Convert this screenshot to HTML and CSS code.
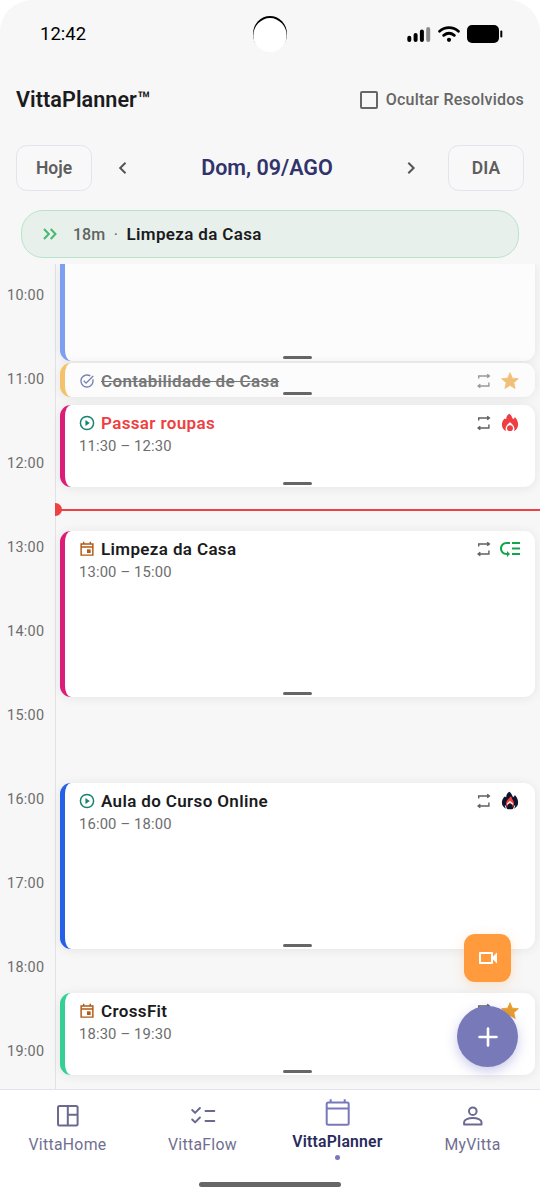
FILE: index.html
```html
<!DOCTYPE html>
<html lang="pt-BR">
<head>
<meta charset="utf-8">
<meta name="viewport" content="width=device-width">
<title>VittaPlanner</title>
<link rel="stylesheet" href="styles.css">
</head>
<body>
<svg class="defs" width="0" height="0" aria-hidden="true">
  <symbol id="repeat" viewBox="0 0 16 16"><path d="M2.700 5.400V3h10.500M11.200 1.200 13.400 3l-2.200 1.800M12.900 9.400V13H1.900M4.300 11.200 2.100 13l2.200 1.800" fill="none" stroke="currentColor" stroke-width="1.400"/></symbol>
  <symbol id="star" viewBox="0 0 24 24"><path fill="currentColor" stroke="currentColor" stroke-width="1" stroke-linejoin="round" d="M12 17.270 18.180 21l-1.640-7.030L22 9.240l-7.190-.61L12 2 9.190 8.630 2 9.240l5.460 4.730L5.820 21z"/></symbol>
  <symbol id="play" viewBox="0 0 24 24"><circle cx="12" cy="12" r="9.900" fill="none" stroke="currentColor" stroke-width="2.200"/><path d="m9.700 7.600 6.400 4.400-6.400 4.400z" fill="currentColor"/></symbol>
  <symbol id="event" viewBox="0 0 24 24"><path fill="none" stroke="currentColor" stroke-width="2.200" d="M3.200 4.500h17.600v16.700H3.200zM3.200 9h17.600M7 5V1.200M17 5V1.200"/><path fill="currentColor" d="M12 12.500h5.500V18H12z"/></symbol>
</svg>
<div class="screen">
  <header class="status">
    <span class="clock">12:42</span>
    <span class="camera"></span>
    <span class="indicators">
      <svg width="24" height="18" viewBox="0 0 24 18"><g stroke="#000" stroke-width="4" stroke-linecap="round"><path d="M2.300 12.700v2.200M8.600 9.900v5M14.900 6.600v8.300"/><path stroke="#8b8b8b" d="M21.200 4v10.900"/></g></svg>
      <svg width="22" height="18" viewBox="0 0 22 18"><g fill="none" stroke="#000" stroke-width="2.800" stroke-linecap="round"><path d="M1.600 6.200c5.400-4.800 13.400-4.800 18.800 0M5.700 10.300c3.200-2.500 7.400-2.500 10.600 0"/></g><circle cx="11" cy="14.800" r="2.100"/></svg>
      <svg width="36" height="18" viewBox="0 0 36 18"><rect width="32" height="18" rx="5"/><rect x="33.300" y="5.500" width="2" height="7" rx="1"/></svg>
    </span>
  </header>
  <div class="titlebar">
    <h1 class="brand">VittaPlanner™</h1>
    <label class="hide"><span class="box"></span><span class="hide-text">Ocultar Resolvidos</span></label>
  </div>
  <div class="datebar">
    <button class="pill"><span class="today">Hoje</span></button>
    <svg class="arrow" width="24" height="24" viewBox="0 0 24 24"><path d="m14.500 6.800-5.300 5.200 5.300 5.200"/></svg>
    <span class="date">Dom, 09/AGO</span>
    <svg class="arrow forward" width="24" height="24" viewBox="0 0 24 24"><path d="m9.300 6.800 5.300 5.200-5.300 5.200"/></svg>
    <button class="pill"><span class="day">DIA</span></button>
  </div>
  <div class="banner">
    <svg width="16" height="14" viewBox="0 0 16 14"><path d="m2 2 4.800 5L2 12M8.700 2l4.800 5-4.800 5" fill="none" stroke="#45b872" stroke-width="2"/></svg>
    <span class="left">18m</span><span class="sep">·</span><span class="next">Limpeza da Casa</span>
  </div>
  <main class="timeline">
    <div class="hours">
      <span>10:00</span><span>11:00</span><span>12:00</span><span>13:00</span><span>14:00</span><span>15:00</span><span>16:00</span><span>17:00</span><span>18:00</span><span>19:00</span>
    </div>
    <div class="events">
      <article class="card first done blue-soft"><i class="grip"></i></article>
      <article class="card slim done yellow">
        <div class="row">
          <svg class="kind" viewBox="0 0 24 24" color="#7480b5"><path fill="currentColor" d="M22 5.180 10.590 16.600l-4.240-4.240 1.410-1.410 2.830 2.830 10-10L22 5.180zm-2.210 5.040c.13.570.21 1.170.21 1.780 0 4.420-3.580 8-8 8s-8-3.580-8-8 3.580-8 8-8c1.580 0 3.040.460 4.280 1.250l1.440-1.440C16.100 2.670 14.130 2 12 2 6.480 2 2 6.480 2 12s4.480 10 10 10 10-4.480 10-10c0-1.190-.220-2.330-.600-3.390l-1.610 1.610z"/></svg>
          <h2 class="name struck">Contabilidade de Casa</h2>
          <svg class="repeat"><use href="#repeat"/></svg>
          <svg class="flag soft-star"><use href="#star"/></svg>
        </div><i class="grip"></i>
      </article>
      <article class="card short pink">
        <div class="row">
          <svg class="kind teal"><use href="#play"/></svg>
          <h2 class="name late">Passar roupas</h2>
          <svg class="repeat"><use href="#repeat"/></svg>
          <svg class="flag" viewBox="0 0 20 20"><path fill="#ef3e42" d="M9.300.8C7.200 2 6.200 3.900 6.200 6.300L4.700 5.400C3 7 1.900 9.200 1.900 11.400c0 3.300 1.800 5.700 4.300 6.700C4.400 14.600 6.700 11.800 10 9.300c3.300 2.500 5.600 5.300 3.800 8.800 2.500-1 4.300-3.400 4.300-6.700 0-2.800-1.400-5.600-3.300-7.300-.3 1.200-.9 1.900-1.800 2.100C11.900 3.600 10.800 1.500 9.300.8z"/><circle cx="10" cy="15.200" r="2.900" fill="#ef3e42"/></svg>
        </div>
        <p class="time">11:30 – 12:30</p><i class="grip"></i>
      </article>
      <article class="card tall pink">
        <div class="row">
          <svg class="kind brown"><use href="#event"/></svg>
          <h2 class="name">Limpeza da Casa</h2>
          <svg class="repeat"><use href="#repeat"/></svg>
          <svg class="flag priority" viewBox="0 0 24 24"><path fill="#13a54a" d="M14 5h8v2h-8zm0 5.500h8v2h-8zm0 5.500h8v2h-8zM2 11.500C2 15.080 4.920 18 8.500 18H9v2l3-3-3-3v2h-.5C6.020 16 4 13.980 4 11.500S6.020 7 8.500 7H12V5H8.500C4.920 5 2 7.920 2 11.500z"/></svg>
        </div>
        <p class="time">13:00 – 15:00</p><i class="grip"></i>
      </article>
      <article class="card tall blue">
        <div class="row">
          <svg class="kind teal"><use href="#play"/></svg>
          <h2 class="name">Aula do Curso Online</h2>
          <svg class="repeat"><use href="#repeat"/></svg>
          <svg class="flag" viewBox="0 0 20 20"><path fill="#11142f" d="M9.300.8C7.200 2 6.200 3.900 6.200 6.300L4.700 5.400C3 7 1.900 9.200 1.900 11.400c0 3.800 3 6.900 8.100 6.900s8.100-3.100 8.100-6.900c0-2.800-1.400-5.600-3.300-7.300-.3 1.200-.9 1.900-1.800 2.100C11.900 3.600 10.800 1.500 9.300.8z"/><path fill="#f0443f" d="M10.800 5.300C9.500 7.400 6 9.300 6 13c0 2 1.500 3.500 4 3.500s4-1.500 4-3.500c0-2.100-.8-3.300-1.300-4-.8-1-.5-2.400-1.900-3.700z"/><path fill="none" stroke="#fff" stroke-width="1.200" d="m7.200 13.300 2.800-2.700 2.800 2.700"/><circle cx="10" cy="15.300" r="2.500" fill="#11142f"/><path stroke="#fff" stroke-width="1" d="m5.300 14.500 1.300 4M14.700 14.500l-1.300 4"/></svg>
        </div>
        <p class="time">16:00 – 18:00</p><i class="grip"></i>
      </article>
      <article class="card short green">
        <div class="row">
          <svg class="kind brown"><use href="#event"/></svg>
          <h2 class="name">CrossFit</h2>
          <svg class="repeat"><use href="#repeat"/></svg>
          <svg class="flag gold"><use href="#star"/></svg>
        </div>
        <p class="time">18:30 – 19:30</p><i class="grip"></i>
      </article>
      <div class="now"></div>
    </div>
  </main>
  <div class="fab video"><svg width="24" height="24" viewBox="0 0 24 24"><path fill="#fff" d="M15 8v8H5V8h10m1-2H4c-.55 0-1 .45-1 1v10c0 .55.45 1 1 1h12c.55 0 1-.45 1-1v-3.500l4 4v-11l-4 4V7c0-.55-.45-1-1-1z"/></svg></div>
  <div class="fab add"><svg width="22" height="22" viewBox="0 0 22 22"><path d="M11 2.500v17M2.500 11h17" stroke="#fff" stroke-width="2.600" stroke-linecap="round"/></svg></div>
  <nav class="tabs">
    <a class="tab"><svg width="28" height="28" viewBox="0 0 28 28"><rect x="4" y="4" width="19.600" height="19.600" rx="1.500"/><path d="M13.800 3.800v20M13.800 12.800h10"/></svg><span>VittaHome</span></a>
    <a class="tab"><svg width="28" height="28" viewBox="0 0 28 28"><path stroke-linecap="round" stroke-linejoin="round" d="m3.200 8 2.900 2.900L10.900 6M3.200 17.500l2.900 2.900 4.800-4.900M16.500 9.100h8.800M16.500 19h8.800"/></svg><span>VittaFlow</span></a>
    <a class="tab active"><svg width="28" height="28" viewBox="0 0 28 28"><rect x="2.700" y="3.500" width="22" height="22.300" rx="1.500"/><path d="M2.700 9.500h22M6.700 3.500V.2M20.700 3.500V.2"/></svg><span>VittaPlanner</span><i class="dot"></i></a>
    <a class="tab"><svg width="28" height="28" viewBox="0 0 28 28"><circle cx="13.800" cy="9.200" r="3.800"/><path d="M5.100 22.400v-2.200c0-2.500 4.200-4.200 8.700-4.200s8.700 1.700 8.700 4.200v2.200z" stroke-linejoin="round"/></svg><span>MyVitta</span></a>
    <i class="home"></i>
  </nav>
</div>
</body>
</html>
```
FILE: styles.css
```css
* { box-sizing: border-box; }
body { margin: 0; background: #fff; font-family: Roboto, sans-serif; color: #1b1b1d; }
h1, h2, p { margin: 0; white-space: nowrap; }
span { white-space: nowrap; }
svg { flex: none; }
.defs { position: absolute; }
.screen { position: relative; display: flex; flex-direction: column; width: 540px; height: 1200px; overflow: hidden; border-radius: 32px 32px 0 0; background: #f7f7f7; }

.status { position: relative; height: 68px; flex: none; display: flex; align-items: center; justify-content: space-between; padding: 0 37px 0 40px; color: #000; }
.clock { font-size: 18.500px; }
.camera { position: absolute; left: 253px; top: 16px; width: 34px; height: 36px; border-radius: 50%; background: #fff; box-shadow: inset 0 1.800px 0 .3px #000; }
.indicators { display: flex; gap: 7px; }

.titlebar { height: 62px; flex: none; display: flex; align-items: center; justify-content: space-between; padding: 1px 16px 0; }
.brand { font-size: 21.600px; font-weight: 600; line-height: 28px; letter-spacing: .05px; }
.hide { display: flex; align-items: center; gap: 8px; color: #666; }
.box { width: 18px; height: 18px; border: 2px solid #666; border-radius: 2px; }
.hide-text { font-size: 16px; font-weight: 500; letter-spacing: .22px; }

.datebar { height: 76px; flex: none; display: flex; align-items: center; padding: 0 16px; }
.pill { width: 76px; height: 46px; padding: 0; border: 1px solid #e4e4ef; border-radius: 11px; background: #f8f8f9; font: 600 17.500px Roboto, sans-serif; color: #5e5e5e; }
.arrow { margin: 0 19px; fill: none; stroke: #555; stroke-width: 2; }
.forward { margin-right: 25px; }
.date { flex: 1; padding-bottom: 1px; text-align: center; font-size: 21.500px; font-weight: 600; color: #30346a; }

.banner { margin: 4px 21px 6px; height: 48px; flex: none; display: flex; align-items: center; padding-left: 20px; border: 1px solid #b9e3c8; border-radius: 22px; background: #e7f0eb; }
.left { margin-left: 15px; width: 32px; font-size: 16px; font-weight: 500; color: #60645f; }
.sep { width: 21.500px; text-align: center; color: #60645f; }
.next { font-size: 17px; font-weight: 600; letter-spacing: .35px; }

.timeline { height: 825px; flex: none; display: grid; grid-template-columns: 56px 1fr; overflow: hidden; }
.hours { display: flex; flex-direction: column; padding-top: 20px; border-right: 1px solid #e2e2e4; }
.hours span { height: 84px; flex: none; padding-left: 7px; font-size: 14.400px; line-height: 24px; letter-spacing: .3px; color: #6c6c6c; }
.events { position: relative; padding: 0 5.400px 0 4.400px; }
.card { position: relative; padding: 6px 14.600px 0 13.600px; border-left: 5px solid; border-radius: 11px; background: #fff; box-shadow: 0 1px 11px rgba(0, 0, 0, .08); }
.done { background: #fcfcfc; }
.first { height: 97px; border-top-left-radius: 0; border-top-right-radius: 0; margin-bottom: 2px; }
.slim { height: 34px; margin-bottom: 8px; }
.short { height: 82px; margin-bottom: 44px; }
.tall { height: 166px; margin-bottom: 86px; }
.tall.blue { margin-bottom: 44px; }
.blue-soft { border-left-color: #7c9ff0; }
.yellow { border-left-color: #f4c26a; }
.pink { border-left-color: #db1d78; }
.blue { border-left-color: #2460e8; }
.green { border-left-color: #36cf96; }
.row { display: flex; align-items: center; height: 24px; }
.kind { width: 16px; height: 16px; margin-right: 6px; }
.teal { color: #16826f; }
.brown { color: #b25a16; }
.name { flex: 1; font-size: 17px; font-weight: 600; letter-spacing: .36px; }
.struck { color: #777; text-decoration: line-through; }
.late { color: #ef3e42; }
.repeat { width: 16px; height: 16px; margin-right: 8px; color: #606060; }
.done .repeat { color: #999; }
.flag { width: 20px; height: 20px; }
.priority { width: 24px; height: 24px; margin: 0 -2px; }
.soft-star { color: #f1c078; }
.gold { color: #e99c29; }
.time { font-size: 14.800px; line-height: 22px; letter-spacing: .15px; color: #6d6d6d; }
.grip { position: absolute; left: 217.600px; bottom: 1.700px; width: 29px; height: 3.500px; border-radius: 2px; background: #666; }
.now { position: absolute; left: 0; right: 0; top: 244.600px; height: 2.600px; background: #ef4144; }
.now::before { content: ""; position: absolute; left: -1px; top: -5.200px; width: 7px; height: 13px; border-radius: 0 7px 7px 0; background: #ef4144; }

.fab { position: absolute; display: grid; place-items: center; }
.video { left: 464px; top: 934px; width: 47px; height: 48px; border-radius: 11px; background: #ff9b3d; box-shadow: 0 3px 12px rgba(255, 155, 61, .25); }
.add { left: 457px; top: 1006px; width: 61px; height: 61px; border-radius: 50%; background: #7779b9; box-shadow: 0 4px 12px rgba(100, 100, 200, .35); }

.tabs { position: relative; height: 111px; flex: none; display: grid; grid-template-columns: repeat(4, 1fr); align-items: start; border-top: 1px solid #e2e2ec; background: #fff; }
.tab { display: flex; flex-direction: column; align-items: center; padding-top: 11.500px; font-size: 15.800px; line-height: 20px; letter-spacing: .3px; color: #716f91; }
.tab svg { margin-bottom: 5px; fill: none; stroke: #6b698f; stroke-width: 2; overflow: visible; }
.tab.active { padding-top: 9px; font-weight: 600; letter-spacing: .2px; color: #292b5c; }
.active svg { stroke: #7779bd; }
.dot { width: 5px; height: 5px; margin-top: 3px; border-radius: 50%; background: #7779bd; }
.home { position: absolute; left: 199px; top: 92px; width: 142px; height: 5px; border-radius: 3px; background: #666; }
```
